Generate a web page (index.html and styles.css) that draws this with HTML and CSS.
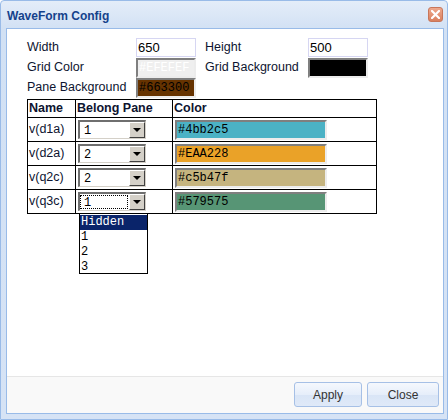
FILE: index.html
```html
<!DOCTYPE html>
<html>
<head>
<meta charset="utf-8">
<link rel="stylesheet" href="styles.css">
</head>
<body>
<div class="win">
  <div class="titlebar">
    <span class="title">WaveForm Config</span>
    <span class="close"><svg width="9" height="9" viewBox="0 0 9 9"><path d="M1 1 L8 8 M8 1 L1 8" stroke="#fff" stroke-width="2.2" stroke-linecap="square"/></svg></span>
  </div>
  <div class="panel">
    <div class="content">
      <div class="form">
        <span class="lbl">Width</span>
        <span class="txt">650</span>
        <span class="lbl">Height</span>
        <span class="txt">500</span>
        <span class="lbl">Grid Color</span>
        <span class="clr c-efef">#EFEFEF</span>
        <span class="lbl">Grid Background</span>
        <span class="clr c-black">#000000</span>
        <span class="lbl">Pane Background</span>
        <span class="clr c-brown">#663300</span>
      </div>
      <table class="grid">
        <tr class="head">
          <td><div class="cell w1">Name</div></td>
          <td><div class="cell w2">Belong Pane</div></td>
          <td><div class="cell w3">Color</div></td>
        </tr>
        <tr>
          <td><div class="cell w1">v(d1a)</div></td>
          <td><div class="cell w2"><div class="combo"><span class="val">1</span><span class="arrow"></span></div></div></td>
          <td><div class="cell w3"><span class="swatch s1">#4bb2c5</span></div></td>
        </tr>
        <tr>
          <td><div class="cell w1">v(d2a)</div></td>
          <td><div class="cell w2"><div class="combo"><span class="val">2</span><span class="arrow"></span></div></div></td>
          <td><div class="cell w3"><span class="swatch s2">#EAA228</span></div></td>
        </tr>
        <tr>
          <td><div class="cell w1">v(q2c)</div></td>
          <td><div class="cell w2"><div class="combo"><span class="val">2</span><span class="arrow"></span></div></div></td>
          <td><div class="cell w3"><span class="swatch s3">#c5b47f</span></div></td>
        </tr>
        <tr>
          <td><div class="cell w1">v(q3c)</div></td>
          <td><div class="cell w2"><div class="combo open"><span class="val focus">1</span><span class="arrow"></span>
            <ul class="list">
              <li class="sel">Hidden</li>
              <li>1</li>
              <li>2</li>
              <li>3</li>
            </ul>
          </div></div></td>
          <td><div class="cell w3"><span class="swatch s4">#579575</span></div></td>
        </tr>
      </table>
    </div>
    <div class="footer">
      <button class="btn b-apply">Apply</button>
      <button class="btn b-close">Close</button>
    </div>
  </div>
</div>
</body>
</html>
```
FILE: styles.css
```css
html, body {
  margin: 0;
  padding: 0;
  background: #fff;
}
.win {
  width: 448px;
  height: 420px;
  box-sizing: border-box;
  border: 1px solid #99bbe8;
  border-radius: 4px 4px 0 0;
  background: linear-gradient(to bottom, #e4edf9 0px, #d2e1f4 28px, #d6e3f5 100%);
  padding: 0 3px 5px 5px;
  display: flex;
  flex-direction: column;
  font-family: "Liberation Sans", Arial, sans-serif;
}
.titlebar {
  height: 27px;
  display: flex;
  align-items: flex-start;
  justify-content: space-between;
  flex: none;
}
.title {
  font-weight: bold;
  font-size: 12px;
  color: #15428b;
  margin-left: 1px;
  margin-top: 8px;
  line-height: 14px;
}
.close {
  width: 15px;
  height: 15px;
  box-sizing: border-box;
  margin-top: 6px;
  margin-right: 1px;
  border: 1px solid #c8765a;
  border-radius: 3px;
  background: linear-gradient(to bottom, #eea88c, #d9805f);
  display: flex;
  align-items: center;
  justify-content: center;
}
.panel {
  flex: 1;
  border: 1px solid #99bbe8;
  background: #fff;
  display: flex;
  flex-direction: column;
}
.content {
  flex: 1;
  padding: 9px 0 0 20px;
}
.form {
  display: grid;
  grid-template-columns: 109px 69px 103px 60px;
  grid-auto-rows: 20px;
  margin-bottom: 1px;
}
.lbl {
  font-size: 12.5px;
  color: #0d1430;
  line-height: 18px;
  align-self: start;
}
.txt {
  width: 60px;
  height: 19px;
  box-sizing: border-box;
  border: 1px solid #d6d6f2;
  font-size: 13px;
  line-height: 17px;
  padding-left: 1px;
  color: #000;
}
.clr {
  width: 60px;
  height: 20px;
  box-sizing: border-box;
  border-top: 2px solid #7f7f7f;
  border-left: 2px solid #7f7f7f;
  border-right: 2px solid #ececec;
  border-bottom: 2px solid #ececec;
  font-family: "Liberation Mono", "Courier New", monospace;
  font-size: 12px;
  line-height: 16px;
  padding-left: 1px;
  overflow: hidden;
  white-space: nowrap;
}
.c-efef { background: #efefef; color: #fff; }
.c-black { background: #000; color: #000; }
.c-brown { background: #663300; color: #000; }
.grid {
  border-collapse: collapse;
  font-size: 12.5px;
  color: #0d1430;
}
.grid td {
  border: 1px solid #000;
  padding: 0;
  vertical-align: top;
}
.cell {
  height: 23px;
  box-sizing: border-box;
  padding: 1px 0 0 1px;
  line-height: 21px;
  display: flex;
  align-items: flex-start;
}
.head .cell {
  height: 17px;
  padding: 0 0 0 1px;
  line-height: 17px;
  font-weight: bold;
}
.w1 { width: 47px; }
.w2 { width: 96px; }
.w3 { width: 203px; }
.combo {
  position: relative;
  margin: 1px 0 0 1px;
  width: 68px;
  height: 19px;
  box-sizing: border-box;
  border-top: 2px solid #6f6f6f;
  border-left: 2px solid #6f6f6f;
  border-right: 1px solid #d4d0c8;
  border-bottom: 1px solid #d4d0c8;
  background: #fff;
  display: flex;
  font-family: "Liberation Mono", "Courier New", monospace;
  font-size: 12px;
  color: #000;
}
.val {
  flex: 1;
  line-height: 14px;
  padding-left: 3px;
  margin: 1px 1px 1px 0;
  border: 1px solid transparent;
}
.val.focus {
  border: 1px dotted #000;
}
.arrow {
  width: 16px;
  height: 16px;
  box-sizing: border-box;
  background: #d4d0c8;
  border-top: 1px solid #fff;
  border-left: 1px solid #fff;
  border-right: 1px solid #404040;
  border-bottom: 1px solid #404040;
  position: relative;
}
.arrow::after {
  content: "";
  position: absolute;
  left: 3px;
  top: 5px;
  border-left: 4px solid transparent;
  border-right: 4px solid transparent;
  border-top: 4px solid #000;
}
.list {
  position: absolute;
  left: -1px;
  top: 19px;
  width: 69px;
  height: 61px;
  box-sizing: border-box;
  margin: 0;
  padding: 1px 0 0 0;
  list-style: none;
  border: 1px solid #000;
  background: #fff;
  font-family: "Liberation Mono", "Courier New", monospace;
  font-size: 12px;
  color: #000;
  z-index: 5;
}
.list li {
  height: 15px;
  line-height: 15px;
  padding-left: 1px;
}
.list li.sel {
  background: #0a246a;
  color: #fff;
}
.swatch {
  margin: 1px 0 0 1px;
  width: 152px;
  height: 20px;
  box-sizing: border-box;
  border-top: 2px solid #7f7f7f;
  border-left: 2px solid #7f7f7f;
  border-right: 2px solid #ececec;
  border-bottom: 2px solid #ececec;
  font-family: "Liberation Mono", "Courier New", monospace;
  font-size: 12px;
  line-height: 16px;
  padding-left: 1px;
  color: #000;
}
.s1 { background: #4bb2c5; }
.s2 { background: #eaa228; }
.s3 { background: #c5b47f; }
.s4 { background: #579575; }
.footer {
  height: 37px;
  box-sizing: border-box;
  border-top: 1px solid #e6e6e6;
  background: #f9f9f9;
  display: flex;
  justify-content: flex-end;
  align-items: flex-start;
  padding: 5px 4px 0 0;
  gap: 5px;
  flex: none;
}
.btn {
  height: 25px;
  box-sizing: border-box;
  border: 1px solid #a6c0e6;
  border-radius: 3px;
  background: linear-gradient(to bottom, #f5f8fd 0%, #e6eefa 50%, #d9e5f6 51%, #dfe9f8 100%);
  font-family: "Liberation Sans", Arial, sans-serif;
  font-size: 12px;
  color: #333;
  padding: 0;
}
.b-apply { width: 68px; }
.b-close { width: 72px; }
```
